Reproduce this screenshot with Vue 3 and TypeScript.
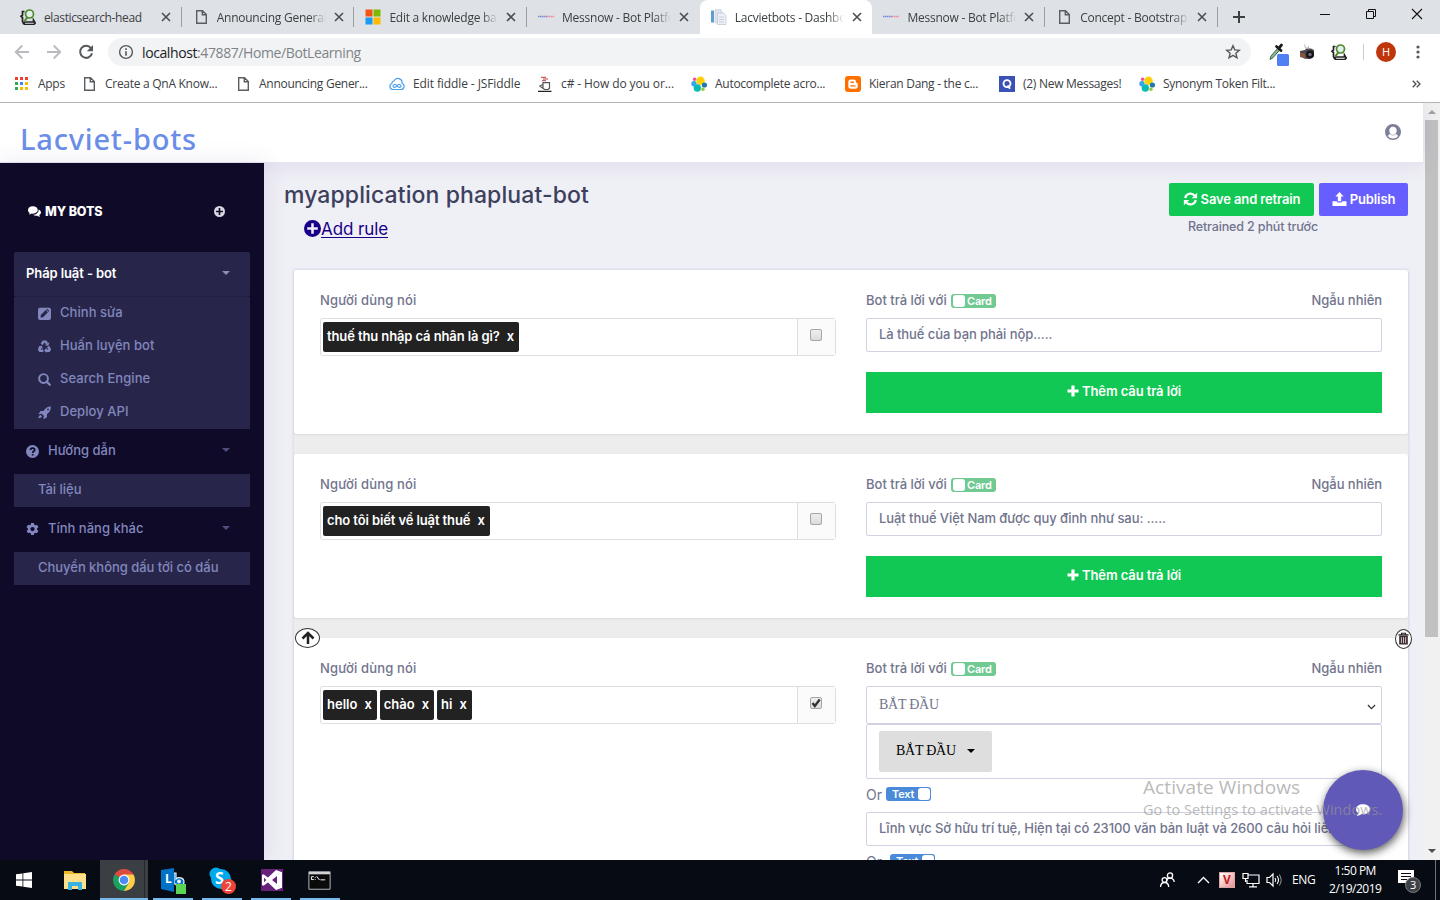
<script setup lang="ts">
interface Tab { title: string; icon: string; active?: boolean }
interface Bookmark { title: string; icon: string; width: number }
interface Answer { kind: 'text' | 'card'; value: string }
interface Rule { tags: string[]; checked: boolean; answers: Answer[]; tools?: boolean }
interface TaskApp { icon: string; letter?: string; badge?: string }

const tabs: Tab[] = [
  { title: 'elasticsearch-head', icon: 'head' },
  { title: 'Announcing General', icon: 'doc' },
  { title: 'Edit a knowledge bas', icon: 'ms' },
  { title: 'Messnow - Bot Platfo', icon: 'mess' },
  { title: 'Lacvietbots - Dashbo', icon: 'book', active: true },
  { title: 'Messnow - Bot Platfo', icon: 'mess' },
  { title: 'Concept - Bootstrap', icon: 'doc' },
]

const bookmarks: Bookmark[] = [
  { title: 'Apps', icon: 'apps', width: 67 },
  { title: 'Create a QnA Know...', icon: 'doc', width: 154 },
  { title: 'Announcing Gener...', icon: 'doc', width: 154 },
  { title: 'Edit fiddle - JSFiddle', icon: 'cloud', width: 148 },
  { title: 'c# - How do you or...', icon: 'cup', width: 154 },
  { title: 'Autocomplete acro...', icon: 'elastic', width: 154 },
  { title: 'Kieran Dang - the c...', icon: 'blogger', width: 154 },
  { title: '(2) New Messages!', icon: 'quora', width: 140 },
  { title: 'Synonym Token Filt...', icon: 'elastic', width: 140 },
]

const botLinks = [
  { title: 'Chỉnh sửa', icon: 'edit' },
  { title: 'Huấn luyện bot', icon: 'recycle' },
  { title: 'Search Engine', icon: 'search' },
  { title: 'Deploy API', icon: 'rocket' },
]

const groups = [
  { title: 'Hướng dẫn', icon: 'help', child: 'Tài liệu' },
  { title: 'Tính năng khác', icon: 'cog', child: 'Chuyển không dấu tới có dấu' },
]

const rules: Rule[] = [
  { tags: ['thuế thu nhập cá nhân là gì?'], checked: false, answers: [{ kind: 'text', value: 'Là thuế của bạn phải nộp.....' }] },
  { tags: ['cho tôi biết về luật thuế'], checked: false, answers: [{ kind: 'text', value: 'Luật thuế Việt Nam được quy đinh như sau: .....' }] },
  {
    tags: ['hello', 'chào', 'hi'],
    checked: true,
    tools: true,
    answers: [
      { kind: 'card', value: 'BẮT ĐẦU' },
      { kind: 'text', value: 'Lĩnh vực Sở hữu trí tuệ, Hiện tại có 23100 văn bản luật và 2600 câu hỏi liên quan' },
    ],
  },
]

const apps: TaskApp[] = [
  { icon: 'explorer' },
  { icon: 'chrome' },
  { icon: 'lync', letter: 'L' },
  { icon: 'skype', letter: 'S', badge: '2' },
  { icon: 'vs' },
  { icon: 'cmd' },
]
</script>

<template>
  <div class="screen">
    <svg class="sprite" aria-hidden="true">
      <symbol id="doc" viewBox="0 0 16 16"><path d="M3.700 1.700h5.800l3.800 3.800v8.800H3.700zM9.300 1.900v3.900h3.800" fill="none" stroke="#5a5d61" stroke-width="1.400" /></symbol>
      <symbol id="head" viewBox="0 0 16 16">
        <path d="M4.500 2.500H2.500v3.500L1 7.300l1.500 1.200v4.200l2 2M5 13h8.500v-2l1.700 3-1.400 1.500H5l-1.500-1z" fill="none" stroke="#222" stroke-width="1.700" />
        <circle cx="9.500" cy="5" r="4" fill="#e2efe8" stroke="#4f8a2e" stroke-width="1.700" /><path d="M7.300 8.300l-3 4.200" stroke="#4f8a2e" stroke-width="2" />
      </symbol>
      <symbol id="ms" viewBox="0 0 16 16"><path fill="#f65314" d="M.500.500h7v7h-7z" /><path fill="#7cbb00" d="M8.500.500h7v7h-7z" /><path fill="#1e9bf0" d="M.500 8.500h7v7h-7z" /><path fill="#ffbb00" d="M8.500 8.500h7v7h-7z" /></symbol>
      <symbol id="mess" viewBox="0 0 16 16"><path d="M0 7.500h9" stroke="#7c8cd6" stroke-width="1.500" stroke-dasharray="1.600 .4" /><path d="M9 7.500h7" stroke="#f28e9e" stroke-width="1.500" stroke-dasharray="1.600 .4" /></symbol>
      <symbol id="book" viewBox="0 0 16 16"><path fill="#5f9fcf" d="M0 1.500h3v12H0z" /><path fill="#dfe4ee" stroke="#c5ccd8" stroke-width=".7" d="M4 .700h6l1 2v11H4z" /><path fill="#edf0f6" stroke="#bac3d2" stroke-width=".7" d="M6.500 4h6l2.500 2.500v9H6.500z" /><path d="M8 8h5M8 10.500h5M8 13h5" stroke="#c8d0de" /></symbol>
      <symbol id="apps" viewBox="0 0 16 16">
        <path fill="#ea4335" d="M1 1h3v3H1zM6 1h3v3H6zM11 1h3v3h-3z" /><path fill="#34a853" d="M1 6h3v3H1zM1 11h3v3H1z" /><path fill="#4285f4" d="M6 6h3v3H6z" /><path fill="#fbbc05" d="M11 6h3v3h-3zM6 11h3v3H6zM11 11h3v3h-3z" />
      </symbol>
      <symbol id="cloud" viewBox="0 0 16 16"><path d="M4 13.500a3.200 3.200 0 0 1-1-6.200A2 2 0 0 1 5 5a4.200 4.200 0 0 1 8 2.300 3.200 3.200 0 0 1-1 6.200z" fill="none" stroke="#4da0ee" stroke-width="1.200" /><path d="M8 9.900c-2-2.400-4-1.400-4 0s2 2.400 4 0 4-1.400 4 0-2 2.400-4 0z" fill="none" stroke="#4da0ee" stroke-width="1.200" /></symbol>
      <symbol id="cup" viewBox="0 0 16 16"><path d="M4 1.300h5M6 3h5M5 4.700h4" stroke="#c03a3a" stroke-width="1" /><path d="M6 6.700h6.500v5.500l-1.500 1.300H7.500L6 12.200zM5.800 8.500l-3 1.500 3 2.200" fill="none" stroke="#555" stroke-width="1.200" /><path d="M1 15.400h13.500" stroke="#222" stroke-width="1.300" /></symbol>
      <symbol id="elastic" viewBox="0 0 16 16"><circle cx="9.500" cy="4.700" r="4.200" fill="#fed10a" /><circle cx="6.300" cy="12" r="3.700" fill="#07bdb3" /><circle cx="3" cy="7.700" r="2.700" fill="#36a7e3" /><circle cx="13.400" cy="9" r="2.600" fill="#2078b0" /><circle cx="3.600" cy="3.300" r="1.700" fill="#ef5098" /><circle cx="12" cy="13.300" r="1.700" fill="#93c83e" /></symbol>
      <symbol id="blogger" viewBox="0 0 16 16"><rect width="16" height="16" rx="3" fill="#ff6f00" /><path d="M5.700 3.500h3a2.300 2.300 0 0 1 2.300 2.300c0 .8.200 1 1 1.100.6.100.8.400.8 1v2a2.800 2.800 0 0 1-2.800 2.800H5.900a2.600 2.600 0 0 1-2.600-2.600V5.900a2.400 2.400 0 0 1 2.400-2.400z" fill="#fff" /><path d="M6 6.300h2.300M6 9.900h4" stroke="#ff6f00" stroke-width="1.400" stroke-linecap="round" /></symbol>
      <symbol id="quora" viewBox="0 0 16 16"><path fill="#3a51b5" d="M0 0h16v16H0z" /><circle cx="8" cy="7.600" r="3.500" fill="none" stroke="#fff" stroke-width="1.900" /><path d="M8.500 9.500l2.500 3.300" stroke="#fff" stroke-width="1.900" /></symbol>
      <symbol id="close" viewBox="0 0 10 10"><path d="M1 1l8 8M9 1L1 9" stroke="#4a4d51" stroke-width="1.600" /></symbol>
      <symbol id="arrow" viewBox="0 0 16 16"><path d="M15 8H2M8.300 1.500L1.800 8l6.500 6.500" fill="none" stroke="currentColor" stroke-width="1.900" /></symbol>
      <symbol id="reload" viewBox="0 0 16 16"><path d="M13 4.300A6 6 0 1 0 14 9.200" fill="none" stroke="#55585c" stroke-width="2" /><path d="M15 1v6.200H8.800z" fill="#55585c" /></symbol>
      <symbol id="info" viewBox="0 0 16 16"><circle cx="8" cy="8" r="6.400" fill="none" stroke="#55585c" stroke-width="1.400" /><path d="M8 4.200v1.700M8 7.200v4.600" stroke="#55585c" stroke-width="1.600" /></symbol>
      <symbol id="star" viewBox="0 0 16 16"><path d="M8 1.700l1.800 4.200 4.600.4-3.500 3 1.100 4.500L8 11.400l-4 2.400 1.100-4.500-3.500-3 4.600-.4z" fill="none" stroke="#55585c" stroke-width="1.400" /></symbol>
      <symbol id="dropper" viewBox="0 0 22 24"><path d="M2 17.500l1-3.500 6.500-7.500 2 1.700L5 15.700z" fill="#8fb59c" stroke="#3c6b4d" stroke-width="1" /><path d="M8.500 4.500l4.500 4M10.700 6.300L13.500 3" stroke="#1c1c1c" stroke-width="2.800" stroke-linecap="round" /><rect x="9" y="12" width="12" height="12" rx="1.500" fill="#4f80f4" /></symbol>
      <symbol id="camera" viewBox="0 0 16 16"><path d="M1 7l5-1 1-1.500h5L15 6v6l-4 3-5-.300-5-2z" fill="#4a464c" /><path d="M1 8.500l5 1.200v4.800l-5-2z" fill="#8b5636" /><circle cx="11" cy="10.500" r="4" fill="#17171a" /><circle cx="11" cy="10.500" r="1.700" fill="#6b7180" /><path d="M5.500.500l1 3.500h3L9.500 2" fill="none" stroke="#b5b5c0" /></symbol>
      <symbol id="user" viewBox="0 0 16 16"><path fill-rule="evenodd" d="M8 0a8 8 0 1 0 0 16A8 8 0 0 0 8 0zm0 2.700c2.200 0 3.700 1.600 3.700 3.900S10.200 11 8 11 4.300 8.900 4.300 6.600 5.800 2.700 8 2.700zM2.900 12.300C3.300 11 4.100 10.300 5 10a4.400 4.400 0 0 0 6 0c.9.300 1.700 1 2.100 2.300A6.700 6.700 0 0 1 8 14.600a6.700 6.700 0 0 1-5.100-2.300z" fill="currentColor" /></symbol>
      <symbol id="comments" viewBox="0 0 16 14"><path d="M6 0c3.500 0 6 2 6 4.500S9.500 9 6 9l-1.300-.1C3.600 9.800 2.200 10.200 1 10.200c.7-.6 1.100-1.200 1.200-2C.8 7.300 0 6 0 4.500 0 2 2.500 0 6 0z" fill="currentColor" /><path d="M13 4c1.800.7 3 2 3 3.600 0 1.400-.8 2.500-2.100 3.200.1.900.5 1.500 1.200 2-1.300 0-2.600-.4-3.700-1.300-2 .4-4 0-5.300-1C10 10.500 13.400 8 13 4z" fill="currentColor" /></symbol>
      <symbol id="comment" viewBox="0 0 16 16"><path d="M8 1.500c4.500 0 8 2.400 8 5.600s-3.500 5.700-8 5.700l-1.700-.1C4.700 14 3 14.600.8 14.800c1-1 1.700-2 1.700-3.300C.9 10.400 0 8.900 0 7.100c0-3.200 3.500-5.600 8-5.600z" fill="currentColor" /></symbol>
      <symbol id="plus-circle" viewBox="0 0 16 16"><path fill-rule="evenodd" d="M8 0a8 8 0 1 0 0 16A8 8 0 0 0 8 0zM6.800 3h2.400v3.800H13v2.400H9.200V13H6.800V9.200H3V6.800h3.800z" fill="currentColor" /></symbol>
      <symbol id="edit" viewBox="0 0 16 16"><path fill-rule="evenodd" d="M2.500 1h11A2.500 2.500 0 0 1 16 3.500v10a2.500 2.500 0 0 1-2.500 2.500h-11A2.500 2.500 0 0 1 0 13.500v-10A2.500 2.500 0 0 1 2.500 1zM3 13l.5-3.200 6-6 2.700 2.700-6 6zM10.200 3.100l1-1 2.700 2.700-1 1z" fill="currentColor" /></symbol>
      <symbol id="recycle" viewBox="0 0 16 16"><path d="M4.500 5.500L6.700 2h2.800l1.700 2.800M12.300 8l2.200 3.500-1 1.700h-3.700M6.500 13.200h-4l-1-1.700 2-3.300" fill="none" stroke="currentColor" stroke-width="3" /><path d="M8.300 6.500l4.500.7L14 2.800zM10.500 9.500L7.500 13l3 3zM0 8.700l4.500-2L6 10.900z" fill="currentColor" /></symbol>
      <symbol id="search" viewBox="0 0 16 16"><circle cx="6.800" cy="6.800" r="5.400" fill="none" stroke="currentColor" stroke-width="2.400" /><path d="M10.900 10.900l3.600 3.600" stroke="currentColor" stroke-width="2.800" stroke-linecap="round" /></symbol>
      <symbol id="rocket" viewBox="0 0 16 16"><path fill-rule="evenodd" d="M15.800.700c.1 4-1.200 6.500-4.800 9.400v3.700L7.300 16l-.8-.7.900-2.900-2.900-2.900-3 .8L.8 9.500 3.300 6h3.400C9.500 2.500 12 .600 15.800.700zM12.300 3.100a1.100 1.100 0 1 0 0 2.200 1.100 1.100 0 0 0 0-2.200zM3.200 11.200L5 13c-.8 1.500-2.300 2-4.500 2 .2-2 1-3.300 2.700-3.800z" fill="currentColor" /></symbol>
      <symbol id="help" viewBox="0 0 16 16"><circle cx="8" cy="8" r="8" fill="currentColor" /><path d="M5.500 6.300c0-3.400 5.200-3.100 5.200-.3 0 1.700-2.400 1.700-2.500 3.700M8.200 11v2" fill="none" stroke="#0e0a28" stroke-width="2.100" /></symbol>
      <symbol id="cog" viewBox="2 2 20 20"><path fill="currentColor" fill-rule="evenodd" d="M9.800 2h4.400l.5 2.700 1.600.9 2.600-.9 2.200 3.800-2.100 1.800v1.900l2.100 1.800-2.200 3.800-2.600-.9-1.600.9-.5 2.700H9.800l-.5-2.700-1.600-.9-2.600.9L2.900 14l2.100-1.800v-1.900L2.900 8.500l2.200-3.800 2.600.9 1.600-.9zM12 8a3.300 3.300 0 1 0 0 6.600A3.300 3.300 0 0 0 12 8z" /></symbol>
      <symbol id="sync" viewBox="0 0 16 16"><path d="M2 7a6 6 0 0 1 10.700-2.800M14 9a6 6 0 0 1-10.700 2.800" fill="none" stroke="currentColor" stroke-width="2.500" /><path d="M15.600.800v6.200H9.400zM.4 15.200V9h6.200z" fill="currentColor" /></symbol>
      <symbol id="upload" viewBox="0 0 16 16"><path d="M8 0l4.700 5H9.900v5.500H6.100V5H3.300zM0 10.500h4.800c.3 1 1 1.400 1.800 1.400h2.800c.8 0 1.500-.4 1.800-1.400H16V16H0z" fill="currentColor" /></symbol>
      <symbol id="plus" viewBox="0 0 12 12"><path d="M6 .500v11M.500 6h11" stroke="currentColor" stroke-width="3.200" /></symbol>
      <symbol id="up" viewBox="0 0 14 14"><path d="M7 13V3M1.500 7.500L7 2l5.500 5.500" fill="none" stroke="currentColor" stroke-width="2.500" /></symbol>
      <symbol id="trash" viewBox="0 0 12 14"><path d="M3.800 2V.700h4.400V2M.5 2.600h11" fill="none" stroke="#2b2226" stroke-width="1.300" /><path d="M1.300 3.300h9.400V13H1.300z" fill="#3a2b33" /><path d="M3.700 5v6.500M6 5v6.500M8.300 5v6.500" stroke="#f3dfe8" stroke-width=".9" /></symbol>
      <symbol id="win" viewBox="0 0 16 16"><path fill="#fff" d="M0 2.300l6.500-.9v6.200H0zM7.300 1.300L16 0v7.600H7.300zM0 8.400h6.500v6.200L0 13.700zM7.300 8.400H16V16l-8.700-1.300z" /></symbol>
      <symbol id="explorer" viewBox="0 0 24 24"><path fill="#eeb82c" d="M1 3h8l2 2h11v5H1z" /><path fill="#fee08a" d="M1 6h22v15H1z" /><path fill="#38b1e5" d="M5 14h14v8h-4v-4H9v4H5z" /></symbol>
      <symbol id="chrome" viewBox="0 0 24 24"><path fill="#dd4b3e" d="M12 12L2.500 6.500a11 11 0 0 1 19 0z" /><path fill="#ffcd46" d="M12 12V6.500h9.500A11 11 0 0 1 12 23z" /><path fill="#1aa260" d="M12 12l4.800 2.700L12 23A11 11 0 0 1 2.500 6.500z" /><circle cx="12" cy="12" r="5.400" fill="#fff" /><circle cx="12" cy="12" r="4.300" fill="#4c8bf5" /></symbol>
      <symbol id="lync" viewBox="0 0 28 28"><path d="M15 7h2v6c2-2 8-2 8 3 0 4-5 5-8 3v-1h-2z" fill="#0072c6" stroke="#e9f4fc" stroke-width="1.200" /><circle cx="20" cy="15.500" r="2" fill="#e9f4fc" /><path fill="#0072c6" d="M2 4l13-2v24L2 23z" /><path fill="#5cd455" d="M17 18h10v10H17z" /></symbol>
      <symbol id="skype" viewBox="0 0 28 28"><circle cx="8" cy="8" r="6.500" fill="#00a9ec" /><circle cx="17" cy="17" r="7" fill="#00a9ec" /><circle cx="13" cy="13" r="10" fill="#00a9ec" /></symbol>
      <symbol id="vs" viewBox="0 0 24 24"><path fill="#68217a" d="M1 1h22v22H1z" /><path fill="#fff" fill-rule="evenodd" d="M16 2l6 2.300v15.400L16 22l-8-7.500-4.500 3.300L2 17V7l1.500-.8L8 9.500zm1 6l-5 4 5 4zM4 9.700v4.600L6.300 12z" /></symbol>
      <symbol id="cmd" viewBox="0 0 24 20"><path fill="#0a0a0a" stroke="#b9bdc0" d="M.800.800h22.400v18.400H.800z" /><path fill="#cfd3d6" d="M1 1h22v2.500H1z" /><path d="M6 6H3.500v3H6M7.500 6.500v.8M7.500 8.500v.8M9 5.500l3 4M13 9.300h5" fill="none" stroke="#fff" /></symbol>
      <symbol id="people" viewBox="0 0 18 18"><g fill="none" stroke="#fff" stroke-width="1.300"><circle cx="11" cy="4.500" r="2.600" /><path d="M7.500 10c.8-4 7-4 7.800 1" /><circle cx="5.500" cy="9" r="2.400" /><path d="M1.500 16c.2-6 8-6 8.200 0" /></g></symbol>
      <symbol id="network" viewBox="0 0 18 16"><path d="M6 3h11v8.500H5V8M11 12v3M7 14.800h8M1 1.500h5v5H1zM3.500 6.500V10" fill="none" stroke="#fff" stroke-width="1.200" /></symbol>
      <symbol id="speaker" viewBox="0 0 18 16"><path d="M1 5.500h2.500L7 2v12l-3.500-3.500H1z" fill="none" stroke="#fff" stroke-width="1.200" /><path d="M9 6q1.500 2 0 4M11 4q3 4 0 8" fill="none" stroke="#fff" stroke-width="1.100" /><path d="M13.200 2.500q4 5.500 0 11" fill="none" stroke="#888" stroke-width="1.100" /></symbol>
      <symbol id="notes" viewBox="0 0 26 26"><path fill="#fff" d="M1 3h16v13h-5v3l-4-3H1z" /><path d="M4 6.500h10M4 9.500h10M4 12.500h6" stroke="#070b13" stroke-width="1.100" /></symbol>
    </svg>

    <header class="browser">
      <div class="tabs">
        <div v-for="(tab, i) in tabs" :key="i" class="tab" :class="{ active: tab.active, before: tabs[i + 1]?.active }">
          <svg class="i16"><use :href="'#' + tab.icon" /></svg>
          <span class="tab-title" :class="{ whole: i === 0 }">{{ tab.title }}</span>
          <svg class="tab-close"><use href="#close" /></svg>
        </div>
        <svg class="new-tab" viewBox="0 0 12 12"><path d="M6 0v12M0 6h12" stroke="#3c4043" stroke-width="2" /></svg>
        <div class="window-buttons">
          <svg viewBox="0 0 12 12"><path d="M1 6.500h10" stroke="#111" /></svg>
          <svg viewBox="0 0 12 12"><path d="M1.500 3.500h7v7h-7zM3.500 3.500v-2h7v7h-2" fill="none" stroke="#111" /></svg>
          <svg viewBox="0 0 12 12"><path d="M1 1l10 10M11 1L1 11" stroke="#111" stroke-width="1.100" /></svg>
        </div>
      </div>
      <div class="toolbar">
        <svg class="nav dim"><use href="#arrow" /></svg>
        <svg class="nav dim flip"><use href="#arrow" /></svg>
        <svg class="nav"><use href="#reload" /></svg>
        <div class="omnibox">
          <svg class="i16"><use href="#info" /></svg>
          <span class="url"><b>localhost</b>:47887/Home/BotLearning</span>
          <svg class="i16"><use href="#star" /></svg>
        </div>
        <div class="extensions">
          <svg class="dropper"><use href="#dropper" /></svg>
          <svg class="i16"><use href="#camera" /></svg>
          <svg class="i16 head"><use href="#head" /></svg>
          <i class="divider" />
          <span class="avatar">H</span>
          <svg class="dots" viewBox="0 0 4 14"><circle cx="2" cy="2" r="1.600" /><circle cx="2" cy="7" r="1.600" /><circle cx="2" cy="12" r="1.600" /></svg>
        </div>
      </div>
      <div class="bookmarks">
        <div v-for="(mark, i) in bookmarks" :key="i" class="bookmark" :class="mark.icon" :style="{ width: mark.width + 'px' }">
          <svg class="i16"><use :href="'#' + mark.icon" /></svg><span>{{ mark.title }}</span>
        </div>
        <svg class="more" viewBox="0 0 9 8"><path d="M.700.700L4 4 .700 7.300M4.700.700L8 4 4.700 7.300" fill="none" stroke="#4a4d51" stroke-width="1.300" /></svg>
      </div>
    </header>

    <div class="viewport">
      <div class="page">
        <div class="topbar">
          <span class="brand">Lacviet-bots</span>
          <svg class="user"><use href="#user" /></svg>
        </div>
        <div class="body">
          <nav class="sidebar">
            <div class="my-bots">
              <svg class="comments"><use href="#comments" /></svg><span>MY BOTS</span>
              <svg class="add"><use href="#plus-circle" /></svg>
            </div>
            <div class="bot-head">Pháp luật - bot<i class="caret" /></div>
            <ul class="sub">
              <li v-for="link in botLinks" :key="link.title">
                <svg class="side-icon"><use :href="'#' + link.icon" /></svg><span>{{ link.title }}</span>
              </li>
            </ul>
            <template v-for="group in groups" :key="group.title">
              <div class="group"><svg class="side-icon"><use :href="'#' + group.icon" /></svg><span>{{ group.title }}</span><i class="caret dim" /></div>
              <ul class="sub single"><li>{{ group.child }}</li></ul>
            </template>
          </nav>

          <main class="content">
            <div class="title-row">
              <div class="titles">
                <h1>myapplication phapluat-bot</h1>
                <a class="add-rule"><svg><use href="#plus-circle" /></svg><span>Add rule</span></a>
              </div>
              <div class="actions">
                <div class="buttons">
                  <button class="btn green"><svg><use href="#sync" /></svg><span>Save and retrain</span></button>
                  <button class="btn purple"><svg><use href="#upload" /></svg><span>Publish</span></button>
                </div>
                <span class="retrained">Retrained 2 phút trước</span>
              </div>
            </div>

            <div class="rules">
              <section v-for="(rule, i) in rules" :key="i" class="rule" :class="{ last: rule.tools }">
                <template v-if="rule.tools">
                  <span class="round move"><svg><use href="#up" /></svg></span>
                  <span class="round remove"><svg><use href="#trash" /></svg></span>
                </template>
                <div class="column">
                  <div class="label user-says">Người dùng nói</div>
                  <div class="tag-input">
                    <div class="tag-list">
                      <span v-for="tag in rule.tags" :key="tag" class="tag" :class="{ long: tag.length > 10 }">{{ tag }}<b>x</b></span>
                    </div>
                    <div class="addon">
                      <span class="check"><svg v-if="rule.checked" viewBox="0 0 12 12"><path d="M2.500 6l2.300 3L9.700 2.500" fill="none" stroke="#333" stroke-width="2.300" /></svg></span>
                    </div>
                  </div>
                </div>
                <div class="column">
                  <div class="label split">
                    <span class="with">Bot trả lời với <i class="switch card"><em />Card</i></span><span class="random">Ngẫu nhiên</span>
                  </div>
                  <template v-for="(answer, n) in rule.answers" :key="n">
                    <template v-if="answer.kind === 'card'">
                      <div class="select"><span>{{ answer.value }}</span><svg viewBox="0 0 10 6"><path d="M1 .800l4 4 4-4" fill="none" stroke="#333" stroke-width="1.300" /></svg></div>
                      <div class="card-box"><span class="drop">{{ answer.value }}<i /></span></div>
                      <div class="or">Or <i class="switch text">Text<em /></i></div>
                    </template>
                    <div v-else class="text-input">{{ answer.value }}</div>
                  </template>
                  <div v-if="rule.tools" class="or second">Or <i class="switch text">Text<em /></i></div>
                  <div v-else class="more-answers"><svg><use href="#plus" /></svg><span>Thêm câu trả lời</span></div>
                </div>
              </section>
            </div>
          </main>
        </div>
      </div>
      <div class="scrollbar"><i class="tri up" /><div class="thumb" /><i class="tri down" /></div>
      <div class="chat"><svg><use href="#comment" /></svg></div>
      <div class="watermark"><p>Activate Windows</p><small>Go to Settings to activate Windows.</small></div>
    </div>

    <footer class="taskbar">
      <div class="app start"><svg><use href="#win" /></svg></div>
      <div v-for="app in apps" :key="app.icon" class="app" :class="[app.icon, { running: app.icon !== 'explorer' }]">
        <svg><use :href="'#' + app.icon" /></svg>
        <span v-if="app.letter" class="letter">{{ app.letter }}</span>
        <span v-if="app.badge" class="badge">{{ app.badge }}</span>
      </div>
      <div class="tray">
        <svg class="people"><use href="#people" /></svg>
        <svg class="chev" viewBox="0 0 13 8"><path d="M1 7l5.500-5.500L12 7" fill="none" stroke="#fff" stroke-width="1.400" /></svg>
        <span class="vkey">V</span>
        <svg class="net"><use href="#network" /></svg>
        <svg class="net"><use href="#speaker" /></svg>
        <span class="lang">ENG</span>
        <div class="clock"><span>1:50 PM</span><span>2/19/2019</span></div>
        <div class="notes"><svg><use href="#notes" /></svg><span class="count">3</span></div>
      </div>
    </footer>
  </div>
</template>

<style>
body { margin: 0; overflow: hidden; }
</style>

<style scoped>
.screen, .screen * { box-sizing: border-box; }
.screen { width: 1440px; height: 900px; overflow: hidden; display: flex; flex-direction: column; font-family: "Open Sans", "Noto Sans", sans-serif; }
.sprite { position: absolute; width: 0; height: 0; }
svg { display: block; flex: none; }
.i16 { width: 16px; height: 16px; }
.browser { height: 103px; flex: none; background: #fff; border-bottom: 1px solid #b5b5b6; color: #3c4043; font-size: 12px; }
.tabs { height: 34px; background: #dee1e6; display: flex; padding-left: 9px; }
.tab { width: 172.700px; height: 34px; padding-left: 11px; display: flex; align-items: center; position: relative; }
.tab::after { content: ""; position: absolute; right: 0; top: 7px; height: 20px; width: 1px; background: #9b9ea3; }
.tab.active { background: #fff; border-radius: 8px 8px 0 0; }
.tab.active::after, .tab.before::after { display: none; }
.tab-title { width: 109px; margin-left: 8px; overflow: hidden; white-space: nowrap; letter-spacing: -.25px; -webkit-mask-image: linear-gradient(90deg, #000 85%, transparent); mask-image: linear-gradient(90deg, #000 85%, transparent); }
.tab-title.whole { letter-spacing: -.37px; -webkit-mask-image: none; mask-image: none; }
.tab-close { width: 10px; height: 10px; margin-left: 8px; }
.new-tab { width: 12px; height: 12px; margin: 11px 0 0 15px; }
.window-buttons { margin-left: auto; display: flex; gap: 34px; padding: 8px 17px 0 0; }
.window-buttons svg { width: 12px; height: 12px; }
.toolbar { height: 36px; display: flex; align-items: center; padding-left: 14px; }
.nav { width: 16px; height: 16px; margin-right: 16px; color: #55585c; }
.nav.dim { color: #b9bbbe; }
.flip { transform: scaleX(-1); }
.omnibox { width: 1143px; height: 28px; margin-left: -2px; border-radius: 14px; background: #f1f3f4; display: flex; align-items: center; padding: 0 10px; }
.url { flex: 1; margin-left: 8px; font-size: 14px; letter-spacing: -.4px; color: #808488; }
.url b { color: #202124; font-weight: 400; }
.extensions { display: flex; align-items: center; margin-left: 17px; }
.dropper { width: 22px; height: 24px; margin: 4px 9px 0 0; }
.head { margin-left: 16px; }
.divider { width: 1px; height: 16px; margin: 0 12px 0 16px; background: #c9cbce; }
.avatar { width: 20px; height: 20px; border-radius: 50%; background: #bf360c; color: #fff; font-size: 11px; line-height: 20px; text-align: center; }
.dots { width: 4px; height: 14px; margin-left: 20px; fill: #55585c; }
.bookmarks { height: 28px; display: flex; align-items: center; padding-left: 14px; }
.bookmark { display: flex; align-items: center; gap: 8px; white-space: nowrap; letter-spacing: -.28px; }
.bookmark span { margin-top: -1px; }
.bookmark.cloud, .bookmark.cup { letter-spacing: -.1px; }
.more { width: 9px; height: 8px; margin-left: auto; margin-right: 19px; }

.viewport { height: 757px; flex: none; position: relative; display: flex; overflow: hidden; }
.page { width: 1423px; font-family: Inter, "Noto Sans", sans-serif; font-size: 13px; color: #71748d; display: flex; flex-direction: column; background: #efeff6; }
.topbar { height: 60px; flex: none; background: #fff; border-bottom: 1px solid #e6e6f2; display: flex; align-items: center; justify-content: space-between; padding: 0 22px 0 20px; position: relative; box-shadow: 0 0 22px rgba(82, 63, 150, .13); }
.brand { margin-top: 13px; font: 500 29px/40px "Noto Sans", sans-serif; color: #6b8ee8; letter-spacing: .8px; }
.user { width: 16px; height: 16px; margin-bottom: 2px; color: #7c7f98; }
.body { flex: 1; display: flex; min-height: 0; }
.sidebar { width: 264px; flex: none; background: #0e0a28; padding: 0 14px; color: #8287bd; position: relative; font-weight: 500; box-shadow: 0 0 22px rgba(82, 63, 150, .13); }
.my-bots { height: 89px; display: flex; align-items: center; padding: 8px 0 0 14px; color: #fff; font-size: 12.500px; font-weight: 800; }
.my-bots span { letter-spacing: -.1px; }
.comments { width: 13px; height: 12px; margin-right: 4px; }
.add { width: 11px; height: 11px; margin-left: auto; margin-right: 25px; color: #d6d7e2; }
.bot-head { height: 45px; border-radius: 2px; background: #27264a; color: #fff; display: flex; align-items: center; justify-content: space-between; padding: 0 20px 3px 12px; border-bottom: 1px solid #232143; font-weight: 600; letter-spacing: -.1px; }
.caret { border: 4px solid transparent; border-top-color: #8d8eaa; border-bottom: 0; }
.caret.dim { margin-left: auto; border-top-color: #4d4e7d; }
.sub { margin: 0; padding: 0; list-style: none; background: #27264a; }
.sub li { height: 33px; display: flex; align-items: center; padding: 0 0 3px 24px; letter-spacing: .05px; }
.sub.single li { letter-spacing: -.03px; }
.side-icon { width: 13px; height: 13px; margin: 3px 9px 0 0; }
.group { height: 45px; display: flex; align-items: center; padding: 0 20px 3px 12px; }

.content { flex: 1; min-width: 0; padding: 20px 15px 0 20px; }
.title-row { height: 87px; display: flex; justify-content: space-between; }
h1 { margin: 0; font-size: 23px; line-height: 25px; font-weight: 500; color: #3d405c; letter-spacing: .1px; }
.add-rule { display: flex; align-items: center; margin: 9px 0 0 20px; width: 84px; height: 23px; font-size: 17px; letter-spacing: -.1px; color: #1a0089; text-decoration: underline; text-underline-offset: 2px; white-space: nowrap; }
.add-rule svg { width: 17px; height: 17px; }
.actions { display: flex; flex-direction: column; }
.buttons { display: flex; gap: 5px; }
.btn { height: 33px; border: 0; border-radius: 2px; padding: 0 0 2px; color: #fff; display: flex; align-items: center; justify-content: center; gap: 3px; font: 600 13px Inter, sans-serif; letter-spacing: -.13px; white-space: nowrap; }
.btn svg { width: 15px; height: 14px; }
.green { width: 145px; background: #10c853; }
.purple { width: 89px; background: #675eff; }
.retrained { margin: 2px 0 0 19px; line-height: 17px; font-size: 12.500px; font-weight: 500; letter-spacing: -.14px; }
.rules { margin-left: 10px; background: #ededed; display: flex; flex-direction: column; gap: 20px; box-shadow: 0 0 3px rgba(100, 90, 160, .25); }
.rule { height: 164px; background: #fff; border-radius: 3px; padding: 21px 26px 0; display: flex; gap: 30px; position: relative; box-shadow: 0 1px 2px rgba(0, 0, 0, .08); }
.rule.last { height: 260px; }
.column { width: 516px; }
.label { height: 18px; line-height: 18px; margin-bottom: 9px; font-weight: 500; letter-spacing: -.05px; }
.label.user-says { letter-spacing: .15px; }
.split { display: flex; justify-content: space-between; }
.with { letter-spacing: 0; display: flex; align-items: center; gap: 4px; }
.switch { display: inline-flex; align-items: center; justify-content: space-between; width: 45px; height: 14px; padding: 0 4px 0 2px; border-radius: 3px; font: 600 11px/14px Inter, sans-serif; color: #fff; letter-spacing: -.2px; }
.label .switch { margin-top: 2px; }
.switch em { width: 12px; height: 12px; border-radius: 3px; background: #fff; }
.switch.card { background: #70ca92; }
.switch.text { background: #4a8ad8; padding: 0 1px 0 6px; }
.tag-input { height: 38px; border: 1px solid #dedee0; border-radius: 3px; display: flex; }
.tag-list { flex: 1; display: flex; gap: 3px; padding: 3px 2px; }
.tag { height: 30px; line-height: 29px; padding: 0 5px 0 4px; border-radius: 2px; background: #222; color: #fff; font-weight: 600; white-space: nowrap; letter-spacing: 0; }
.tag.long { letter-spacing: -.11px; }
.tag b { margin-left: 7px; font-weight: 600; }
.addon { width: 38px; border-left: 1px solid #dedee0; background: #fbfbfc; display: flex; justify-content: center; padding: 10px 2px 0 0; }
.check { width: 12px; height: 12px; border: 1px solid #a5a5a5; border-radius: 2px; background: linear-gradient(#eee, #dcdcdc); }
.check svg { width: 12px; height: 12px; margin: -1px 0 0 -1px; }
.text-input { height: 34px; border: 1px solid #d2d2e4; border-radius: 2px; padding: 0 12px; line-height: 31px; font-weight: 500; overflow: hidden; white-space: nowrap; letter-spacing: -.08px; }
.more-answers { margin-top: 20px; height: 41px; background: #10c853; color: #fff; display: flex; align-items: center; justify-content: center; gap: 3px; padding-bottom: 3px; font-weight: 600; letter-spacing: -.1px; }
.more-answers svg { width: 12px; height: 12px; }
.select { height: 38px; border: 1px solid #d2d2e4; border-radius: 2px; padding: 0 5px 0 12px; display: flex; align-items: center; justify-content: space-between; font: 14px "Liberation Serif", serif; letter-spacing: -.25px; }
.select svg { width: 9px; height: 6px; margin-top: 3px; }
.card-box { height: 55px; border: 1px solid #d2d2e4; border-radius: 2px; padding: 6px 12px; }
.drop { width: 113px; height: 41px; padding: 0 17px 2px; border-radius: 2px; background: #dedede; color: #000; display: flex; align-items: center; justify-content: space-between; font: 14px "Liberation Serif", serif; letter-spacing: -.25px; }
.drop i { border: 4px solid transparent; border-top-color: #000; border-bottom: 0; }
.or { height: 33px; padding-bottom: 3px; display: flex; align-items: center; gap: 4px; font-size: 14px; }
.second { gap: 8px; }
.round { position: absolute; display: flex; align-items: center; justify-content: center; border: 1px solid #333; border-radius: 50%; background: #fff; height: 20px; color: #222; }
.move { width: 25px; left: 1px; top: -10px; }
.move svg { width: 14px; height: 14px; }
.remove { width: 17px; left: 1101px; top: -9px; }
.remove svg { width: 11px; height: 14px; }
.scrollbar { width: 17px; background: #f1f1f1; display: flex; flex-direction: column; align-items: center; }
.thumb { width: 13px; height: 517px; margin-top: 6px; background: #c1c1c1; }
.tri { border: 4px solid transparent; }
.tri.up { margin-top: 3px; border-bottom-color: #a0a0a0; }
.tri.down { margin: auto 0 3px; border-top-color: #505050; }
.chat { position: absolute; left: 1323px; top: 667px; width: 80px; height: 80px; border-radius: 50%; background: #6059b8; color: #fff; display: flex; align-items: center; justify-content: center; box-shadow: 1px 3px 8px rgba(0, 0, 0, .65); }
.chat svg { width: 14px; height: 14px; }
.watermark { position: absolute; left: 1143px; top: 672px; color: rgba(150, 150, 150, .68); white-space: nowrap; }
.watermark p { margin: 0; font-size: 19px; line-height: 25px; letter-spacing: .08px; }
.watermark small { display: block; font-size: 14.500px; line-height: 20px; letter-spacing: .05px; }

.taskbar { height: 40px; flex: none; background: #070b13; display: flex; color: #fff; gap: 1px; font-size: 12px; }
.app { width: 48px; height: 40px; display: flex; align-items: center; justify-content: center; position: relative; }
.app svg { width: 24px; height: 24px; }
.app.start svg { width: 16px; height: 16px; }
.app.explorer { padding-left: 4px; }
.app.running::after { content: ""; position: absolute; left: 4px; right: 4px; bottom: 0; height: 2px; background: #76b9ed; }
.app.chrome { background: linear-gradient(90deg, #3b3f44 44px, #24282d 44px, #24282d 45px, #3b3f44 45px); margin-left: 2px; }
.app.chrome::after { left: 0; right: 0; }
.app.lync svg, .app.skype svg { width: 28px; height: 28px; }
.app.vs { padding-left: 1px; }
.app.cmd { padding-right: 2px; }
.app.cmd svg { width: 23px; height: 19px; }
.letter { position: absolute; font-weight: 700; line-height: 18px; }
.lync .letter { left: 16px; top: 10px; }
.skype .letter { left: 17px; top: 9px; font-size: 16px; }
.badge { position: absolute; left: 23px; top: 19px; width: 15px; height: 15px; border-radius: 50%; background: #ee4338; line-height: 15px; text-align: center; }
.tray { margin-left: auto; width: 281px; display: flex; align-items: center; border-right: 1px solid #70747a; margin-right: 4px; }
.people { width: 18px; height: 18px; margin: 0 20px 0 4px; }
.chev { width: 13px; height: 8px; margin-right: 9px; }
.vkey { width: 16px; height: 16px; background: linear-gradient(135deg, #fff, #e98f8f); border: 1px solid #d8a4a4; color: #c11f25; font-weight: 700; line-height: 14px; text-align: center; margin-right: 7px; }
.net { width: 18px; height: 16px; margin-right: 6px; }
.lang { letter-spacing: -.4px; margin-left: 2px; margin-right: 13px; margin-top: -1px; }
.clock { width: 54px; display: flex; flex-direction: column; align-items: center; line-height: 18px; letter-spacing: -.5px; white-space: nowrap; margin-top: -1px; }
.notes { width: 26px; height: 26px; margin-left: 15px; position: relative; }
.notes svg { width: 26px; height: 26px; }
.count { position: absolute; left: 8px; top: 10px; width: 16px; height: 16px; border-radius: 50%; border: 1px solid #767a7e; background: #3e4247; font-size: 11px; line-height: 14px; text-align: center; }
</style>
